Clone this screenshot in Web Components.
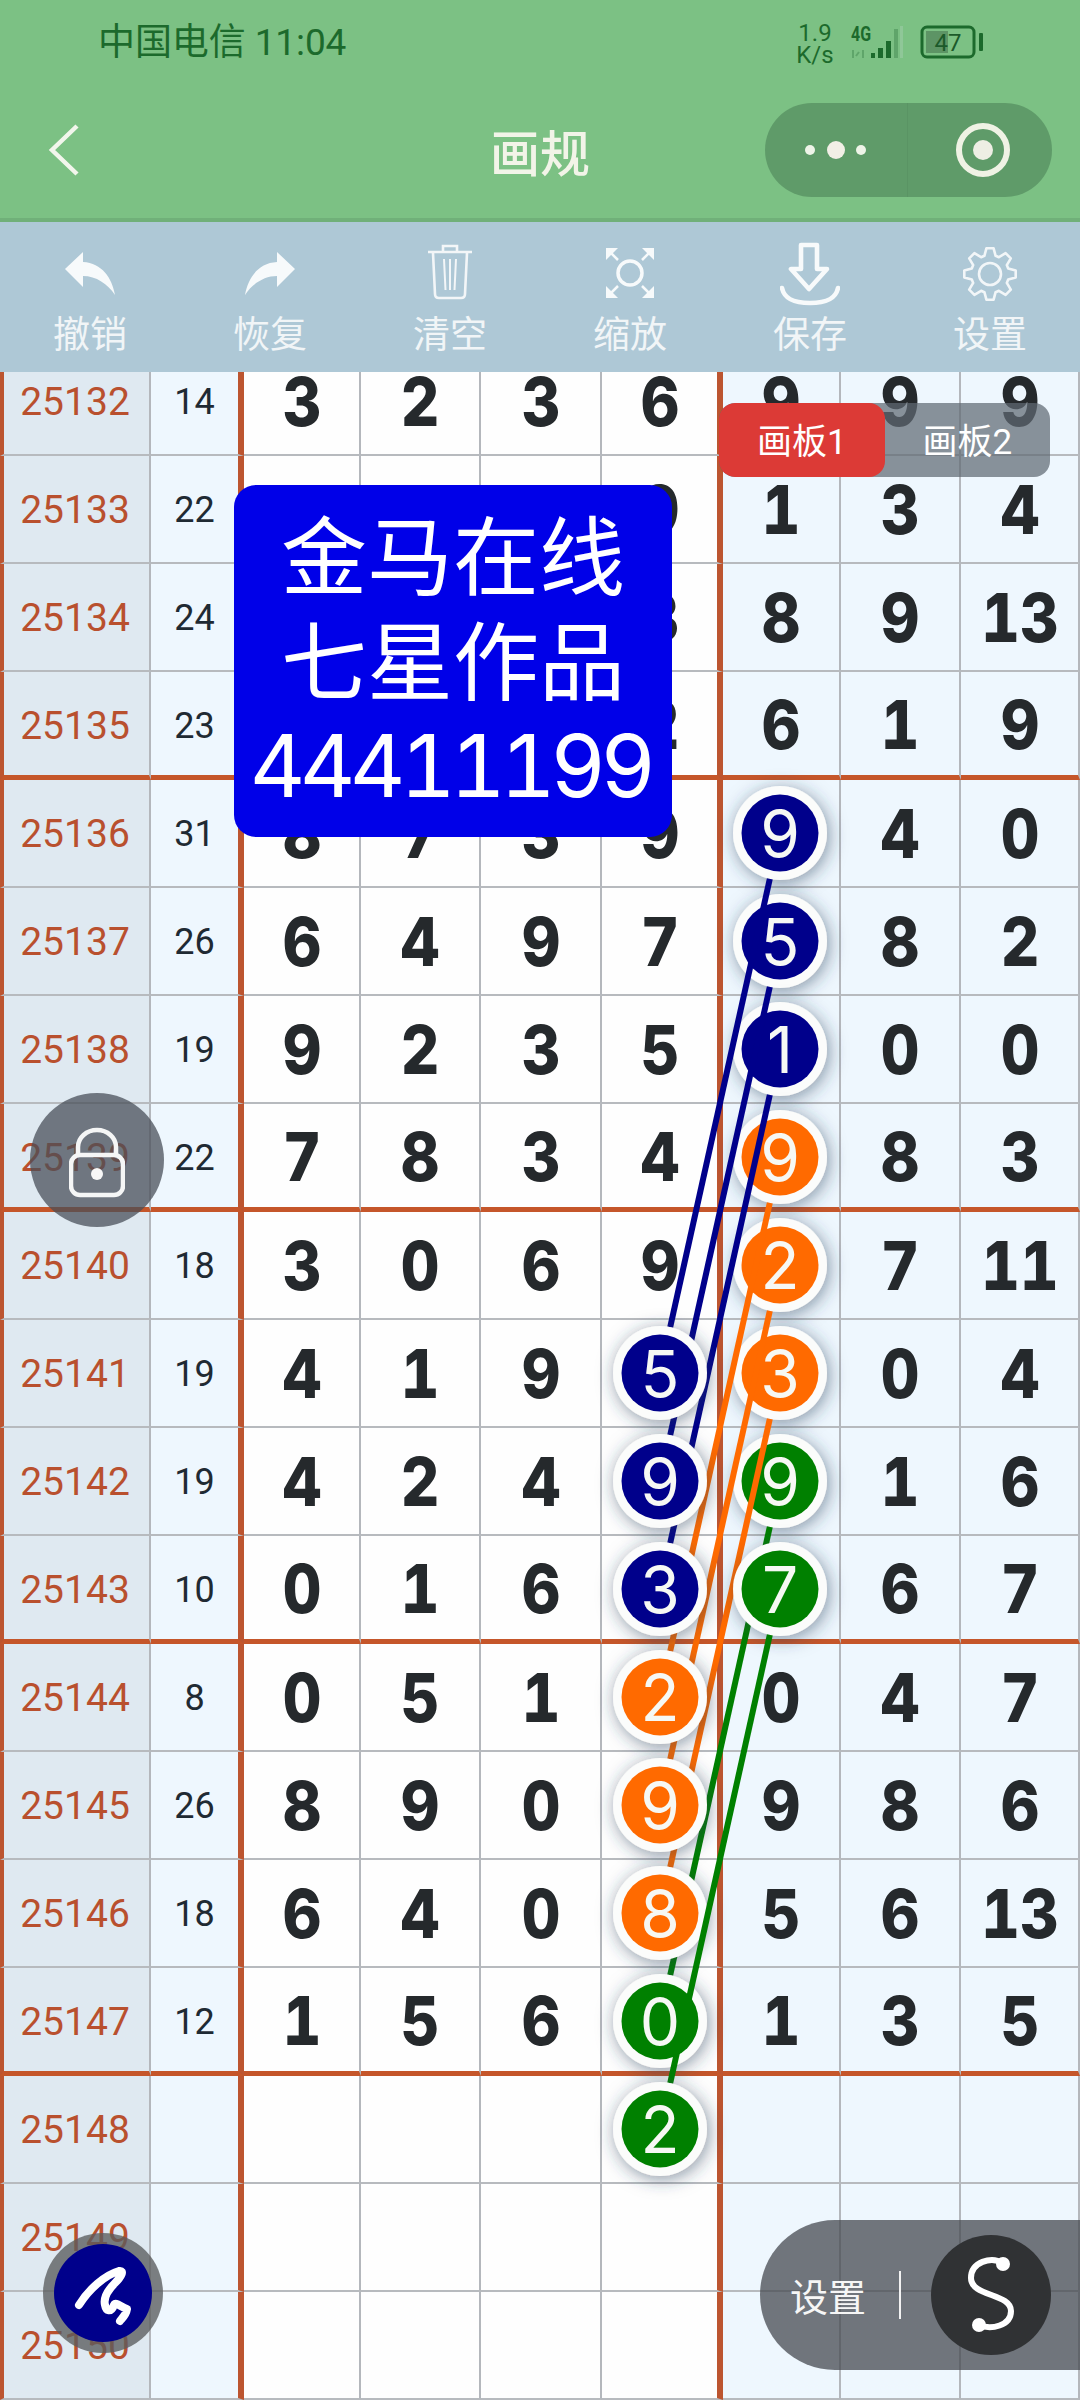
<!DOCTYPE html>
<html lang="zh">
<head>
<meta charset="utf-8">
<title>画规</title>
<style>
html,body{margin:0;padding:0;background:#fff}
body{font-family:"Noto Sans CJK SC","Noto Sans",sans-serif}
</style>
</head>
<body>
<app-screen>
  <status-bar></status-bar>
  <nav-bar></nav-bar>
  <tool-bar>
    <tool-item icon="undo" label="撤销"></tool-item>
    <tool-item icon="redo" label="恢复"></tool-item>
    <tool-item icon="trash" label="清空"></tool-item>
    <tool-item icon="scale" label="缩放"></tool-item>
    <tool-item icon="save" label="保存"></tool-item>
    <tool-item icon="gear" label="设置"></tool-item>
  </tool-bar>
  <lottery-board></lottery-board>
  <board-lines></board-lines>
  <promo-card></promo-card>
  <board-tabs></board-tabs>
  <lock-button></lock-button>
  <pen-button></pen-button>
  <settings-pill></settings-pill>
</app-screen>
<script>
const CJK='"Noto Sans CJK SC","Noto Sans",sans-serif';
const DIGIT='Inter,Roboto,sans-serif';
function make(tag,css,html,init){
  customElements.define(tag,class extends HTMLElement{
    connectedCallback(){
      if(this.shadowRoot)return;
      const r=this.attachShadow({mode:'open'});
      r.innerHTML='<style>'+css+'</style>'+(typeof html==='function'?html(this):html);
      if(init)init(r,this);
    }
  });
}
make('app-screen',`:host{display:flex;flex-direction:column;position:relative;width:1080px;height:2400px;overflow:hidden;font-family:${CJK}}`,'<slot></slot>');

make('status-bar',`:host{display:flex;align-items:center;justify-content:space-between;height:84px;box-sizing:border-box;padding:0 96px 0 98px;background:#7cc184;color:#1c6a2c}
.t{font:400 37px/1 Roboto,${CJK};white-space:nowrap;letter-spacing:-.1px}
.r{display:flex;align-items:center;gap:13px}
.sp{display:flex;flex-direction:column;align-items:center;font:400 24px/22px Roboto,sans-serif;width:40px;margin-right:3px;padding-top:4px}
svg{display:block}`,
`<span class="t">中国电信 11:04</span>
<div class="r"><div class="sp"><span>1.9</span><span>K/s</span></div>
<svg width="56" height="40" viewBox="0 0 56 40"><text x="0" y="19" font-family="Roboto" font-weight="700" font-size="20" fill="#1c6a2c" textLength="20" lengthAdjust="spacingAndGlyphs">4G</text><path d="M2 28v8M8 30l-3 4M12 28v8" stroke="#5fa56a" stroke-width="2" fill="none"/><g fill="#1c6a2c"><rect x="20" y="31" width="4" height="5"/><rect x="27" y="26" width="5" height="10"/><rect x="35" y="19" width="5" height="17"/></g><rect x="43" y="7" width="4" height="29" fill="#5fa56a"/><rect x="49" y="4" width="3" height="32" fill="#8fc798"/></svg>
<svg width="64" height="34" viewBox="0 0 64 34"><rect x="2" y="2" width="52" height="30" rx="5" fill="none" stroke="#1c6a2c" stroke-width="3"/><rect x="6" y="6" width="22" height="22" fill="#5d9465"/><text x="28" y="26" text-anchor="middle" font-family="Roboto" font-size="24" fill="#1c5a2a">47</text><rect x="59" y="8" width="4" height="18" rx="1" fill="#1c6a2c"/></svg></div>`);

make('nav-bar',`:host{display:grid;grid-template-columns:1fr auto 1fr;align-items:center;height:138px;box-sizing:border-box;background:#7cc184;border-bottom:4px solid #70b079;padding:0 28px 2px 28px}
.bk{margin-left:20px}
.ti{font:500 50px/1 ${CJK};color:#f2f4e8}
.c{justify-self:end;display:flex;align-items:center;width:287px;height:94px;border-radius:47px;background:#5f9b69}
.a,.b{display:flex;align-items:center;justify-content:center;height:100%}
.a{width:142px;border-right:1px solid #5a9464}.b{flex:1;padding-left:6px}
svg{display:block}`,
`<svg class="bk" width="34" height="56" viewBox="0 0 34 56"><path d="M29 4 4 28l25 24" fill="none" stroke="#f2f6ec" stroke-width="4.5"/></svg>
<span class="ti">画规</span>
<div class="c"><div class="a"><svg width="70" height="24" viewBox="0 0 70 24"><circle cx="9" cy="12" r="5" fill="#eef4e8"/><circle cx="35" cy="12" r="9" fill="#f2efe6"/><circle cx="60" cy="12" r="5" fill="#eef4e8"/></svg></div>
<div class="b"><svg width="56" height="56" viewBox="0 0 56 56"><circle cx="28" cy="28" r="24" fill="none" stroke="#eff2e4" stroke-width="6"/><circle cx="28" cy="28" r="10" fill="#eeeee4"/></svg></div></div>`);

make('tool-bar',`:host{display:grid;grid-template-columns:repeat(6,180px);height:150px;background:#aec8d6}`,'<slot></slot>');

let gear='';
for(let i=0;i<8;i++){
  const a=i*Math.PI/4-Math.PI/2,p=(r,d)=>{const x=30+r*Math.cos(a+d),y=32+r*Math.sin(a+d);return x.toFixed(1)+' '+y.toFixed(1)};
  gear+=(i?'L':'M')+p(19,-.3)+'L'+p(26,-.14)+'L'+p(26,.14)+'L'+p(19,.3);
}
gear+='Z';
const ICONS={
 undo:`<path fill="#f7fafb" d="M5 27 23 10v10c19 1 29 16 32 33-7-11-19-19-32-19v11z"/>`,
 redo:`<path fill="#f7fafb" d="M55 27 37 10v10C18 21 8 36 5 53c7-11 19-19 32-19v11z"/>`,
 trash:`<g fill="none" stroke="#f3f6f8" stroke-width="2.6"><path d="M8 10h44M23 10V4h14v6M13 11l2 41q0 4 4 4h22q4 0 4-4l2-41"/><path d="m24 17 1.5 31M30 17v31M36 17l-1.500 31" stroke-width="2"/></g>`,
 scale:`<g fill="#f7fafb"><path d="M6 6h12L6 18z"/><path d="M54 6H42l12 12z"/><path d="M6 56h12L6 44z"/><path d="M54 56H42l12-12z"/></g><path d="m9 9 9 9m33-9-9 9M9 53l9-9m33 9-9-9" stroke="#f7fafb" stroke-width="2.500"/><circle cx="30" cy="31" r="12" fill="none" stroke="#f7fafb" stroke-width="3.500"/>`,
 save:`<g fill="none" stroke="#f7fafb" stroke-width="4.600"><path d="M21 3h16v24h10L29 47 11 27h10z" stroke-linejoin="round"/><path d="M2 46c2 10 10 15 28 15s26-5 28-15" stroke-linecap="round"/></g>`,
 gear:`<g fill="none" stroke="#f2f6f8" stroke-width="2.600" stroke-linejoin="round"><path d="${gear}"/><circle cx="30" cy="32" r="11"/></g>`
};
make('tool-item',`:host{display:flex;flex-direction:column;align-items:center;padding-top:20px}
svg{display:block}
span{font:400 37px/44px ${CJK};color:#f1f5f7;margin-top:4px}`,
t=>`<svg width="60" height="64" viewBox="0 0 60 64">${ICONS[t.getAttribute('icon')]}</svg><span>${t.getAttribute('label')}</span>`);

const ROWS=[
['25132','14','3','2','3','6','9','9','9'],
['25133','22','','','','9','1','3','4'],
['25134','24','','','','3','8','9','13'],
['25135','23','','','','2','6','1','9'],
['25136','31','8','7','3','9','','4','0'],
['25137','26','6','4','9','7','','8','2'],
['25138','19','9','2','3','5','','0','0'],
['25139','22','7','8','3','4','','8','3'],
['25140','18','3','0','6','9','','7','11'],
['25141','19','4','1','9','','','0','4'],
['25142','19','4','2','4','','','1','6'],
['25143','10','0','1','6','','','6','7'],
['25144','8','0','5','1','','0','4','7'],
['25145','26','8','9','0','','9','8','6'],
['25146','18','6','4','0','','5','6','13'],
['25147','12','1','5','6','','1','3','5'],
['25148','','','','','','','',''],
['25149','','','','','','','',''],
['25150','','','','','','','','']];
make('lottery-board',`:host{display:block;flex:1;min-height:0;overflow:hidden}
.g{display:grid;grid-template-columns:151px 93px 117px 120px 121px 121px 118px 120px 119px;grid-auto-rows:108px;margin-top:-24px}
.c{display:flex;align-items:center;justify-content:center;box-sizing:border-box;border-right:2px solid #b4b7bc;border-bottom:2px solid #b7babe;background:#eef7fe;color:#25292c;font:800 68px/1 ${DIGIT};font-feature-settings:"tnum";min-width:0}
.c b{font-weight:inherit;display:inline-block;transform:scaleX(.88)}
.n{background:#dfe9f1;color:#b9502e;font:400 39px/1 Roboto,sans-serif;border-left:4px solid #bc5530;padding-top:2px;padding-right:3px}
.s{font:400 36px/1 Roboto,sans-serif;border-right:6px solid #bc5530;color:#1f2a33;padding-top:2px}
.m{background:#fefefe}.e{border-right:6px solid #bc5530}
.th{border-bottom:5px solid #c5562a;padding-bottom:0}
.th.n,.th.s{padding-top:5px}`,
()=>{
  let h='<div class="g">';
  ROWS.forEach((r,i)=>{
    const th=(i%4===3)?' th':'';
    r.forEach((v,j)=>{
      let c='c'+th;
      if(j===0)c+=' n';else if(j===1)c+=' s';else if(j<=5)c+=' m';
      if(j===5)c+=' e';
      h+=`<div class="${c}">${j>1&&v?'<b>'+v+'</b>':v}</div>`;
    });
  });
  return h+'</div>';
});

const NAVY='#00008b',OR='#ff6a00',GR='#008000';
const Y=n=>833+(n-25136)*108;
const C5=[[25136,9,NAVY],[25137,5,NAVY],[25138,1,NAVY],[25139,9,OR],[25140,2,OR],[25141,3,OR],[25142,9,GR],[25143,7,GR]];
const C4=[[25141,5,NAVY],[25142,9,NAVY],[25143,3,NAVY],[25144,2,OR],[25145,9,OR],[25146,8,OR],[25147,0,GR],[25148,2,GR]];
function circ(x,c){
  const y=Y(c[0]);
  return `<g><circle cx="${x}" cy="${y}" r="47" fill="#fbfcfb" filter="url(#sh)"/><circle cx="${x}" cy="${y}" r="38.500" fill="${c[2]}"/><text x="${x}" y="${y+23.500}" text-anchor="middle" font-family="Inter,Roboto,sans-serif" font-size="64" fill="#f6f8f4">${c[1]}</text></g>`;
}
function seg(i){
  const x1=780,x2=660,y1=Y(C5[i][0]),y2=Y(C4[i][0]),L=Math.hypot(x1-x2,y2-y1),ux=(x2-x1)/L,uy=(y2-y1)/L,d=47;
  return `<line x1="${x1+ux*d}" y1="${y1+uy*d}" x2="${x2-ux*d}" y2="${y2-uy*d}" stroke="${C5[i][2]}" stroke-width="6"/>`;
}
make('board-lines',`:host{display:block;position:absolute;left:0;top:372px;width:1080px;height:2028px;pointer-events:none}svg{display:block}`,
()=>{
  let s='<svg width="1080" height="2028" viewBox="0 372 1080 2028"><defs><filter id="sh" x="-50%" y="-50%" width="200%" height="200%"><feDropShadow dx="2" dy="3" stdDeviation="9" flood-color="#2a3c5a" flood-opacity=".55"/></filter></defs>';
  for(let i=0;i<7;i++)s+=circ(780,C5[i]);
  for(let i=0;i<7;i++)s+=seg(i);
  for(let i=0;i<7;i++)s+=circ(660,C4[i]);
  s+=circ(780,C5[7])+seg(7)+circ(660,C4[7]);
  return s+'</svg>';
});

make('promo-card',`:host{display:flex;flex-direction:column;align-items:center;justify-content:center;position:absolute;left:234px;top:485px;width:438px;height:352px;box-sizing:border-box;padding:0 0 5px;background:#0000e8;border-radius:22px;color:#fff;font:400 86px/105px ${CJK}}
.d{font:400 86px/105px Inter,Roboto,sans-serif;font-feature-settings:"tnum";margin-top:5px;white-space:nowrap;letter-spacing:-5.700px;margin-left:-6px}`,`<div>金马在线</div><div>七星作品</div><div class="d">44411199</div>`);

make('board-tabs',`:host{display:flex;position:absolute;left:719px;top:403px;width:331px;height:74px;border-radius:16px;overflow:hidden;background:rgba(95,105,115,.72);color:#fff;font:400 35px/71px ${CJK}}
div{flex:1;text-align:center}.a{background:#dc3a36;border-radius:16px}
.n{font-family:Roboto,sans-serif}`,`<div class="a">画板<span class="n">1</span></div><div>画板<span class="n">2</span></div>`);

make('lock-button',`:host{display:flex;align-items:center;justify-content:center;position:absolute;left:30px;top:1093px;width:134px;height:134px;box-sizing:border-box;padding-top:6px;border-radius:50%;background:rgba(72,78,88,.74)}svg{display:block}`,
`<svg width="56" height="72" viewBox="2 0 56 72"><g fill="none" stroke="#f5f6f6" stroke-width="4.500"><path d="M11 30V20a19 17 0 0 1 38 0v10"/><rect x="4" y="28" width="52" height="40" rx="9"/></g><circle cx="30" cy="47" r="6" fill="#f7f7f7"/></svg>`);

make('pen-button',`:host{display:flex;align-items:center;justify-content:center;position:absolute;left:43px;top:2233px;width:120px;height:120px;border-radius:50%;background:rgba(90,92,94,.78)}
.i{width:98px;height:98px;border-radius:50%;background:#00008b;display:flex;align-items:center;justify-content:center}svg{display:block}`,
`<div class="i"><svg width="98" height="98" viewBox="11 11 98 98"><path d="M36 72C46 56 62 42 76 38 82 37 78 44 72 50 66 56 60 64 62 72 63 78 68 80 71 72 72 68 78 74 84 76 83 83 78 86 77 88" fill="none" stroke="#fff" stroke-width="8" stroke-linecap="round" stroke-linejoin="round"/></svg></div>`);

make('settings-pill',`:host{display:flex;align-items:center;position:absolute;left:760px;top:2220px;width:320px;height:150px;box-sizing:border-box;padding-left:30px;border-radius:75px 0 0 75px;background:rgba(70,74,80,.75);color:#f6f6f6}
.t{font:400 38px/1 ${CJK};width:80px}
.d{width:2px;height:48px;background:#f2f2f2;margin-left:29px;margin-right:30px}
.o{width:120px;height:120px;border-radius:50%;background:#303234}svg{display:block}`,
`<span class="t">设置</span><span class="d"></span><div class="o"><svg width="120" height="120" viewBox="0 0 120 120"><path d="M72 28C60 21 40 27 40 43 40 62 80 58 80 76 80 91 60 95 48 90" fill="none" stroke="#fff" stroke-width="6"/><circle cx="72" cy="29" r="7" fill="#fff"/><circle cx="48" cy="90" r="7" fill="#fff"/></svg></div>`);
</script>
</body>
</html>
